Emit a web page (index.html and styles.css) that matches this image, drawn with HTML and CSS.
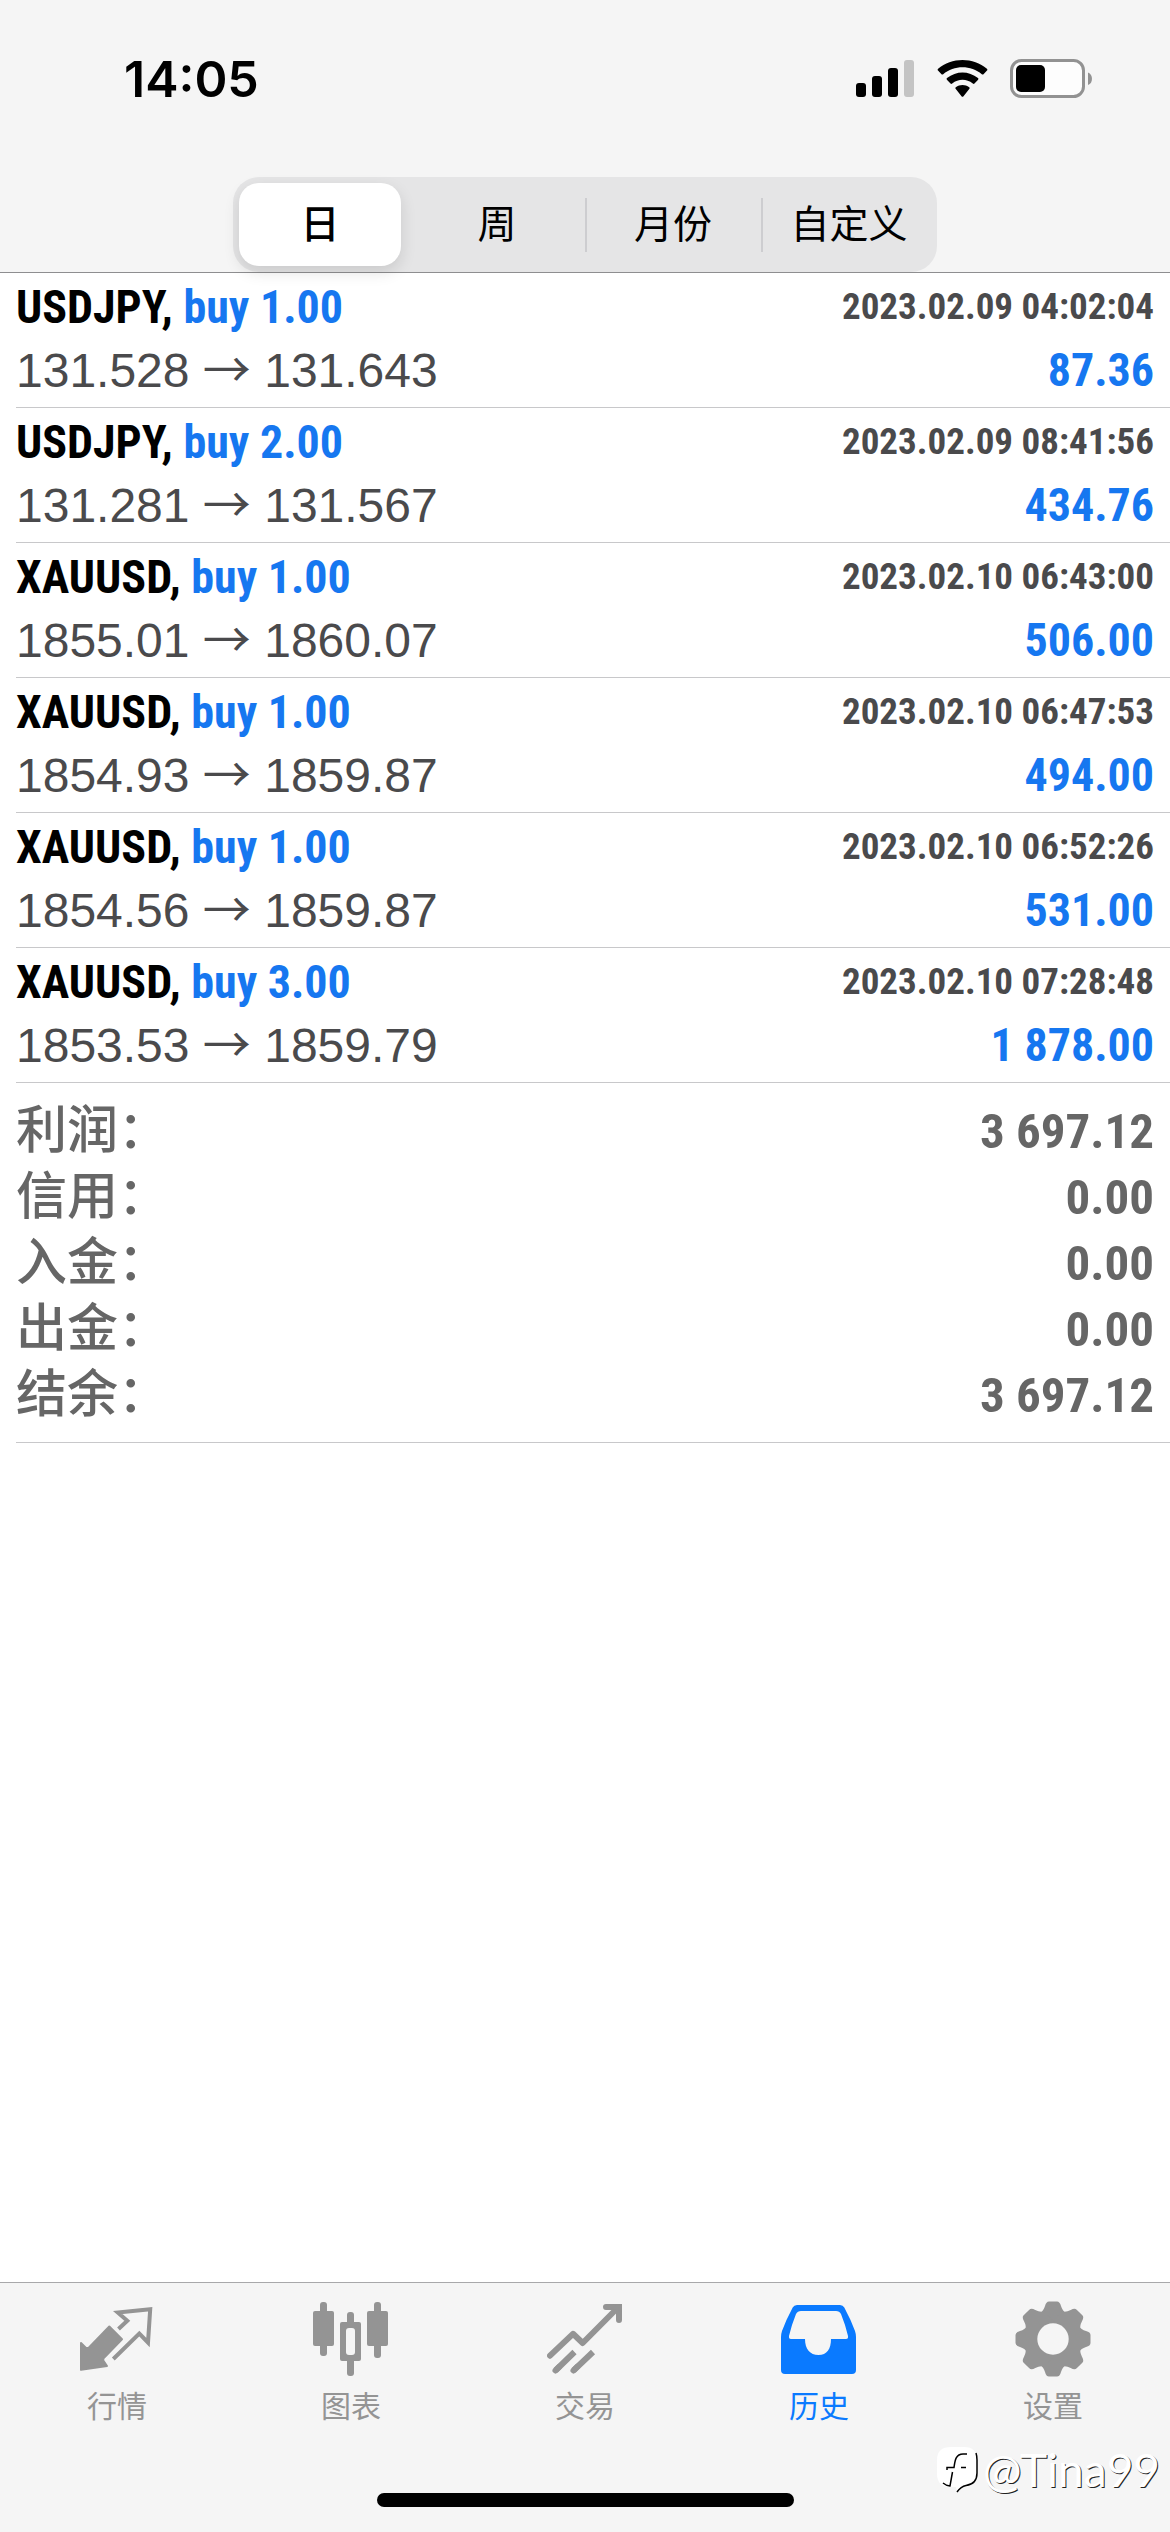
FILE: index.html
```
<!DOCTYPE html>
<html lang="zh-CN">
<head>
  <meta charset="UTF-8">
  <meta name="viewport" content="width=device-width, initial-scale=1.0">
  <title>历史</title>
  <link rel="stylesheet" href="styles.css">
</head>
<body>
  <header class="header">
    <div class="status-bar">
      <span class="time">14:05</span>
      <div class="status-icons">
        <svg width="60" height="40" viewBox="0 0 60 40" aria-hidden="true">
          <rect x="0" y="24" width="10" height="14" rx="3"/>
          <rect x="16" y="17" width="10" height="21" rx="3"/>
          <rect x="32" y="9" width="10" height="29" rx="3"/>
          <rect x="48" y="1" width="10" height="37" rx="3" fill="#c4c4c4"/>
        </svg>
        <svg width="52" height="40" viewBox="0 0 52 40" aria-hidden="true">
          <path d="M1 11.500Q0.200 10.600 1.100 9.700C14.500-1.900 36.500-1.900 49.900 9.700Q50.800 10.600 50 11.500L46.500 15.200Q45.700 16 44.800 15.200C34 5.900 17 5.900 6.200 15.200Q5.300 16 4.500 15.200Z"/>
          <path d="M9.900 20.700Q9.100 19.800 10 19C19.200 11.500 31.800 11.500 41 19Q41.900 19.800 41.100 20.700L37.500 24.500Q36.700 25.300 35.800 24.600C29.500 19.600 21.500 19.600 15.200 24.600Q14.300 25.300 13.500 24.500Z"/>
          <path d="M18.600 29.800Q17.800 28.900 18.800 28.200C22.800 25.400 28.200 25.400 32.200 28.200Q33.200 28.900 32.400 29.800L26.500 37.200Q25.500 38.200 24.500 37.200Z"/>
        </svg>
        <svg width="84" height="40" viewBox="0 0 84 40" aria-hidden="true">
          <rect x="1.500" y="1.500" width="72" height="36" rx="10" fill="#fdfdfd" stroke="#929292" stroke-width="3"/>
          <rect x="6" y="6" width="29" height="27" rx="5"/>
          <path d="M78 13.500C83.300 15 83.300 24.500 78 26Z" fill="#929292"/>
        </svg>
      </div>
    </div>
    <div class="segments">
      <button class="segment active" type="button">日</button>
      <button class="segment" type="button">周</button>
      <button class="segment" type="button">月份</button>
      <button class="segment" type="button">自定义</button>
    </div>
  </header>

  <main class="history">
    <ul class="deals">
      <li class="deal">
        <div class="line">
          <span class="symbol">USDJPY, <span class="blue">buy 1.00</span></span>
          <time class="date">2023.02.09 04:02:04</time>
        </div>
        <div class="line">
          <span class="price">131.528 <span class="arrow">→</span> 131.643</span>
          <span class="profit blue">87.36</span>
        </div>
      </li>
      <li class="deal">
        <div class="line">
          <span class="symbol">USDJPY, <span class="blue">buy 2.00</span></span>
          <time class="date">2023.02.09 08:41:56</time>
        </div>
        <div class="line">
          <span class="price">131.281 <span class="arrow">→</span> 131.567</span>
          <span class="profit blue">434.76</span>
        </div>
      </li>
      <li class="deal">
        <div class="line">
          <span class="symbol">XAUUSD, <span class="blue">buy 1.00</span></span>
          <time class="date">2023.02.10 06:43:00</time>
        </div>
        <div class="line">
          <span class="price">1855.01 <span class="arrow">→</span> 1860.07</span>
          <span class="profit blue">506.00</span>
        </div>
      </li>
      <li class="deal">
        <div class="line">
          <span class="symbol">XAUUSD, <span class="blue">buy 1.00</span></span>
          <time class="date">2023.02.10 06:47:53</time>
        </div>
        <div class="line">
          <span class="price">1854.93 <span class="arrow">→</span> 1859.87</span>
          <span class="profit blue">494.00</span>
        </div>
      </li>
      <li class="deal">
        <div class="line">
          <span class="symbol">XAUUSD, <span class="blue">buy 1.00</span></span>
          <time class="date">2023.02.10 06:52:26</time>
        </div>
        <div class="line">
          <span class="price">1854.56 <span class="arrow">→</span> 1859.87</span>
          <span class="profit blue">531.00</span>
        </div>
      </li>
      <li class="deal">
        <div class="line">
          <span class="symbol">XAUUSD, <span class="blue">buy 3.00</span></span>
          <time class="date">2023.02.10 07:28:48</time>
        </div>
        <div class="line">
          <span class="price">1853.53 <span class="arrow">→</span> 1859.79</span>
          <span class="profit blue">1 878.00</span>
        </div>
      </li>
    </ul>

    <dl class="summary">
      <div class="total"><dt>利润：</dt><dd>3 697.12</dd></div>
      <div class="total"><dt>信用：</dt><dd>0.00</dd></div>
      <div class="total"><dt>入金：</dt><dd>0.00</dd></div>
      <div class="total"><dt>出金：</dt><dd>0.00</dd></div>
      <div class="total"><dt>结余：</dt><dd>3 697.12</dd></div>
    </dl>
  </main>

  <footer class="footer">
    <nav class="tabs">
      <a class="tab" href="#quotes">
        <svg width="76" height="76" viewBox="0 0 76 76" aria-hidden="true">
          <path d="M30.300 25.500L43 38.300L24.300 57.500V59.500L28 65L2 68.800V42L7 47H9.500Z" fill="currentColor" stroke="currentColor" stroke-width="2" stroke-linejoin="round"/>
          <path d="M39.500 28L48.300 19.700L38.800 11.500L71.200 8.200L69 41.500L60.300 32.500L34.300 58" fill="none" stroke="currentColor" stroke-width="4"/>
        </svg>
        <span>行情</span>
      </a>
      <a class="tab" href="#chart">
        <svg width="76" height="76" viewBox="0 0 76 76" fill="currentColor" aria-hidden="true">
          <rect x="7" y="1" width="7" height="54" rx="3"/>
          <rect x="0" y="10" width="21" height="35" rx="2"/>
          <rect x="34" y="11" width="7" height="64" rx="3"/>
          <rect x="27" y="21" width="21" height="39" rx="2"/>
          <rect x="33" y="27" width="9" height="27" rx="3" fill="#f5f5f5"/>
          <rect x="61" y="1" width="7" height="56" rx="3"/>
          <rect x="54" y="10" width="21" height="35" rx="2"/>
        </svg>
        <span>图表</span>
      </a>
      <a class="tab" href="#trade">
        <svg width="76" height="76" viewBox="0 0 76 76" fill="none" stroke="currentColor" stroke-width="6" aria-hidden="true">
          <path d="M3 54.700L26 32.800L35.700 42L71 6.500" stroke-linecap="round" stroke-linejoin="round"/>
          <path d="M59 6H72V19"/>
          <path d="M59 6H66M72 12V19M8.500 69.500L12 66M26.500 69.500L30 66" stroke-linecap="round"/>
          <path d="M8.500 69.500L27.500 51M26.500 69.500L46 51"/>
        </svg>
        <span>交易</span>
      </a>
      <a class="tab active" href="#history">
        <svg width="76" height="76" viewBox="0 0 76 76" fill="currentColor" aria-hidden="true">
          <path fill-rule="evenodd" d="M16 4H59Q62 4 63.300 6.500Q70 19 74 30Q75 33 75 36V69Q75 73 71 73H4Q0 73 0 69V36Q0 33 1 30Q5 19 11.700 6.500Q13 4 16 4ZM20 10Q16.500 10 15 13Q10.500 24 8 35Q7.500 38 10 38H24C24 48 29 54 37.500 54S50 48 50 38H65Q67.500 38 67 35Q64.500 24 60 13Q58.500 10 55 10Z"/>
        </svg>
        <span>历史</span>
      </a>
      <a class="tab" href="#settings">
        <svg width="76" height="76" viewBox="0 0 76 76" fill="currentColor" aria-hidden="true">
          <defs>
            <path id="teeth" d="M25 12Q28.500 10 30 5Q31.200 0.500 34 0.500H42Q44.800 0.500 46 5Q47.500 10 51 12V64Q47.500 66 46 71Q44.800 75.500 42 75.500H34Q31.200 75.500 30 71Q28.500 66 25 64Z"/>
            <mask id="hub">
              <rect width="76" height="76" fill="#fff"/>
              <circle cx="38" cy="38" r="15.700" fill="#000"/>
            </mask>
          </defs>
          <g mask="url(#hub)">
            <use href="#teeth"/>
            <use href="#teeth" transform="rotate(45 38 38)"/>
            <use href="#teeth" transform="rotate(90 38 38)"/>
            <use href="#teeth" transform="rotate(135 38 38)"/>
          </g>
        </svg>
        <span>设置</span>
      </a>
    </nav>
    <div class="home-indicator"></div>
    <div class="watermark">
      <svg width="44" height="48" viewBox="0 0 44 48" aria-hidden="true">
        <path d="M14 1H27Q40 1 40 14V27Q40 38 29 40Q24 41 20 46L19 41H14Q0 41 0 28V14Q0 1 14 1Z" fill="#fff"/>
        <path d="M30 8H26C19 8 18 14 17 21.500H10V24M24 21.500H29M15.500 26L13 40Q9 39.500 6 37M39 7Q40 10 40 14V27Q40 38 29 39.500Q24 40.500 20 46" fill="none" stroke="#000" stroke-width="1.500"/>
      </svg>
      <span>@Tina99</span>
    </div>
  </footer>
</body>
</html>
```
FILE: styles.css
```
* {
  box-sizing: border-box;
}

body {
  margin: 0;
  min-height: 100vh;
  display: flex;
  flex-direction: column;
  background-color: #ffffff;
  color: #000000;
  font-family: "Liberation Sans", "Noto Sans CJK SC", sans-serif;
}

/* Header */
.header {
  display: flex;
  flex-direction: column;
  background-color: #f5f5f5;
  border-bottom: 1px solid #8e8e90;
}

.status-bar {
  display: flex;
  justify-content: space-between;
  align-items: center;
  height: 177px;
  padding: 0 76px 20px 124px;
}

.time {
  font-family: Inter, sans-serif;
  font-size: 50px;
  font-weight: 600;
}

.status-icons {
  display: flex;
  gap: 21px;
}

.segments {
  display: grid;
  grid-template-columns: repeat(4, 1fr);
  align-self: center;
  width: 704px;
  max-width: 90%;
  height: 95px;
  border-radius: 26px;
  background-color: #e5e5e6;
}

.segment {
  position: relative;
  padding: 0;
  border: none;
  background: none;
  color: #000000;
  font-family: "Liberation Sans", "Noto Sans CJK SC", sans-serif;
  font-size: 39px;
  line-height: 48px;
}

.segment.active {
  margin: 6px 8px 6px 6px;
  border-radius: 20px;
  background-color: #ffffff;
  box-shadow: 0 6px 16px rgba(0, 0, 0, 0.12);
  font-weight: 500;
}

/* divider between the plain segments */
.segment + .segment + .segment::before {
  content: "";
  position: absolute;
  left: 0;
  top: 21px;
  width: 2px;
  height: 54px;
  background-color: #cdcdd0;
}

/* Deals */
.history {
  flex: 1;
}

.deals {
  margin: 0;
  padding: 0 0 0 16px;
  list-style: none;
}

.deal {
  padding: 2px 16px 6px 0;
  border-bottom: 1px solid #c8c8ca;
}

.line {
  display: flex;
  justify-content: space-between;
  align-items: center;
  height: 63px;
  white-space: nowrap;
}

.symbol,
.profit {
  font-family: "Roboto Condensed", "Liberation Sans Narrow", "Liberation Sans", sans-serif;
  font-size: 46px;
  font-weight: bold;
}

.date {
  font-family: "Roboto Condensed", "Liberation Sans Narrow", "Liberation Sans", sans-serif;
  font-size: 37px;
  font-weight: bold;
  color: #4a4a4c;
}

.price {
  font-size: 48px;
  color: #4a4a4c;
}

.arrow {
  font-family: "Noto Sans CJK SC", sans-serif;
  line-height: 1;
}

.blue {
  color: #1677f0;
}

/* Summary */
.summary {
  margin: 0 0 0 16px;
  padding: 15px 16px 14px 0;
  border-bottom: 1px solid #c8c8ca;
  color: #666666;
}

.total {
  display: flex;
  justify-content: space-between;
  align-items: center;
  height: 66px;
}

.total dt {
  font-size: 51px;
  font-weight: 500;
  line-height: 66px;
}

.total dd {
  margin: 0;
  font-family: "Roboto Condensed", "Liberation Sans Narrow", "Liberation Sans", sans-serif;
  font-size: 49px;
  font-weight: bold;
}

/* Tab bar */
.footer {
  position: relative;
  display: flex;
  flex-direction: column;
  align-items: center;
  justify-content: space-between;
  height: 250px;
  padding: 18px 0 25px;
  border-top: 1px solid #a8a8aa;
  background-color: #f5f5f5;
}

.tabs {
  display: grid;
  grid-template-columns: repeat(5, 1fr);
  width: 100%;
}

.tab {
  display: flex;
  flex-direction: column;
  align-items: center;
  gap: 10px;
  color: #949494;
  font-size: 30px;
  line-height: 40px;
  text-decoration: none;
}

.tab.active {
  color: #0a7aff;
}

.home-indicator {
  width: 417px;
  height: 14px;
  border-radius: 7px;
  background-color: #000000;
}

.watermark {
  position: absolute;
  right: 10px;
  bottom: 38px;
  display: flex;
  align-items: center;
  gap: 2px;
  color: #ffffff;
  font-family: Lato, sans-serif;
  font-size: 46px;
  line-height: 48px;
  text-shadow: 1px 1px 0 #222222;
}
```
